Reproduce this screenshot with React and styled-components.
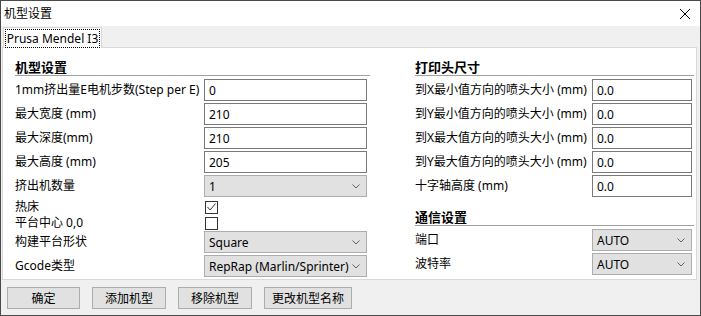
import React from 'react';
import styled, { createGlobalStyle } from 'styled-components';

const GlobalStyle = createGlobalStyle`
  body {
    margin: 0;
    background: #ffffff;
    font-family: "Noto Sans", "Noto Sans CJK SC", sans-serif;
    font-size: 12px;
    color: #000;
  }
`;

const Window = styled.div`
  width: 701px;
  height: 316px;
  box-sizing: border-box;
  border: 1px solid #4a4a4a;
  background: #f0f0f0;
  display: flex;
  flex-direction: column;
`;

const TitleBar = styled.div`
  height: 25px;
  background: #fff;
  display: flex;
  align-items: center;
  justify-content: space-between;
  padding: 0 9px 0 3px;
`;

const TitleText = styled.span`
  font-size: 12px;
  line-height: 16px;
`;

const TabStrip = styled.div`
  display: flex;
  align-items: flex-end;
  padding: 1px 0 0 2px;
`;

const Tab = styled.div`
  position: relative;
  z-index: 1;
  height: 21px;
  margin-bottom: -1px;
  box-sizing: border-box;
  width: 99px;
  background: #fff;
  border: 1px solid #d9d9d9;
  border-bottom: none;
  padding: 1px 1px 0;
  display: flex;
`;

const TabFocus = styled.span`
  flex: 1;
  height: 17px;
  border: 1px dotted #000;
  display: flex;
  align-items: center;
  justify-content: center;
  font-size: 12px;
`;

const Panel = styled.div`
  height: 233px;
  margin: 0 3px 0 1px;
  box-sizing: border-box;
  border: 1px solid #d9d9d9;
  background: #fff;
  display: flex;
  gap: 45px;
  padding-left: 12px;
`;

const Column = styled.div`
  width: ${(p) => p.$width}px;
  display: flex;
  flex-direction: column;
`;

const Heading = styled.div`
  margin-top: ${(p) => p.$top}px;
  height: 16px;
  line-height: 16px;
  font-size: 13px;
  font-weight: bold;
  border-bottom: 1px solid #a0a0a0;
  margin-bottom: 3px;
`;

const Row = styled.div`
  display: grid;
  grid-template-columns: ${(p) => p.$label}px ${(p) => p.$field}px;
  align-items: center;
  height: ${(p) => (p.$short ? 14 : 22)}px;
  margin-bottom: 2px;
`;

const Label = styled.span`
  white-space: nowrap;
  line-height: 16px;
`;

const TextBox = styled.div`
  height: 22px;
  box-sizing: border-box;
  border: 1px solid #7a7a7a;
  background: #fff;
  padding-left: 4px;
  display: flex;
  align-items: center;
`;

const Select = styled.div`
  height: 22px;
  box-sizing: border-box;
  border: 1px solid #adadad;
  background: #e1e1e1;
  padding: 0 6px 0 4px;
  display: flex;
  align-items: center;
  justify-content: space-between;
`;

const Box = styled.div`
  width: 13px;
  height: 13px;
  box-sizing: border-box;
  margin-left: 1px;
  border: 1px solid #333;
  background: #fff;
  display: flex;
  align-items: center;
  justify-content: center;
`;

const ButtonBar = styled.div`
  flex: 1;
  display: flex;
  gap: 12px;
  padding: 7px 0 0 6px;
`;

const Button = styled.div`
  width: ${(p) => p.$width}px;
  height: 22px;
  box-sizing: border-box;
  border: 1px solid #adadad;
  background: #e1e1e1;
  display: flex;
  align-items: center;
  justify-content: center;
  font-size: 12px;
`;

const Chevron = () => (
  <svg width="8" height="5" viewBox="0 0 8 5">
    <path d="M0.5 0.5 L4 4 L7.5 0.5" fill="none" stroke="#606060" strokeWidth="1" />
  </svg>
);

const Check = () => (
  <svg width="11" height="11" viewBox="0 0 11 11">
    <path d="M1.5 5 L4.2 8 L9.5 1.5" fill="none" stroke="#333" strokeWidth="1" />
  </svg>
);

const CloseIcon = () => (
  <svg width="12" height="12" viewBox="0 0 12 12">
    <path d="M1 1 L11 11 M11 1 L1 11" stroke="#000" strokeWidth="1" />
  </svg>
);

const Field = ({ label, value, cols }) => (
  <Row $label={cols[0]} $field={cols[1]}>
    <Label>{label}</Label>
    <TextBox>{value}</TextBox>
  </Row>
);

const Choice = ({ label, value, cols }) => (
  <Row $label={cols[0]} $field={cols[1]}>
    <Label>{label}</Label>
    <Select>
      <span>{value}</span>
      <Chevron />
    </Select>
  </Row>
);

const Toggle = ({ label, checked, cols }) => (
  <Row $label={cols[0]} $field={cols[1]} $short>
    <Label>{label}</Label>
    <div>
      <Box>{checked && <Check />}</Box>
    </div>
  </Row>
);

const LEFT = [189, 163];
const RIGHT = [177, 100];

export default function App() {
  return (
    <>
      <GlobalStyle />
      <Window>
        <TitleBar>
          <TitleText>机型设置</TitleText>
          <CloseIcon />
        </TitleBar>
        <TabStrip>
          <Tab>
            <TabFocus>Prusa Mendel I3</TabFocus>
          </Tab>
        </TabStrip>
        <Panel>
          <Column $width={355}>
            <Heading $top={11}>机型设置</Heading>
            <Field cols={LEFT} label="1mm挤出量E电机步数(Step per E)" value="0" />
            <Field cols={LEFT} label="最大宽度 (mm)" value="210" />
            <Field cols={LEFT} label="最大深度(mm)" value="210" />
            <Field cols={LEFT} label="最大高度 (mm)" value="205" />
            <Choice cols={LEFT} label="挤出机数量" value="1" />
            <Toggle cols={LEFT} label="热床" checked />
            <Toggle cols={LEFT} label="平台中心 0,0" />
            <Choice cols={LEFT} label="构建平台形状" value="Square" />
            <Choice cols={LEFT} label="Gcode类型" value="RepRap (Marlin/Sprinter)" />
          </Column>
          <Column $width={279}>
            <Heading $top={11}>打印头尺寸</Heading>
            <Field cols={RIGHT} label="到X最小值方向的喷头大小 (mm)" value="0.0" />
            <Field cols={RIGHT} label="到Y最小值方向的喷头大小 (mm)" value="0.0" />
            <Field cols={RIGHT} label="到X最大值方向的喷头大小 (mm)" value="0.0" />
            <Field cols={RIGHT} label="到Y最大值方向的喷头大小 (mm)" value="0.0" />
            <Field cols={RIGHT} label="十字轴高度 (mm)" value="0.0" />
            <Heading $top={10}>通信设置</Heading>
            <Choice cols={RIGHT} label="端口" value="AUTO" />
            <Choice cols={RIGHT} label="波特率" value="AUTO" />
          </Column>
        </Panel>
        <ButtonBar>
          <Button $width={73}>确定</Button>
          <Button $width={74}>添加机型</Button>
          <Button $width={74}>移除机型</Button>
          <Button $width={88}>更改机型名称</Button>
        </ButtonBar>
      </Window>
    </>
  );
}
